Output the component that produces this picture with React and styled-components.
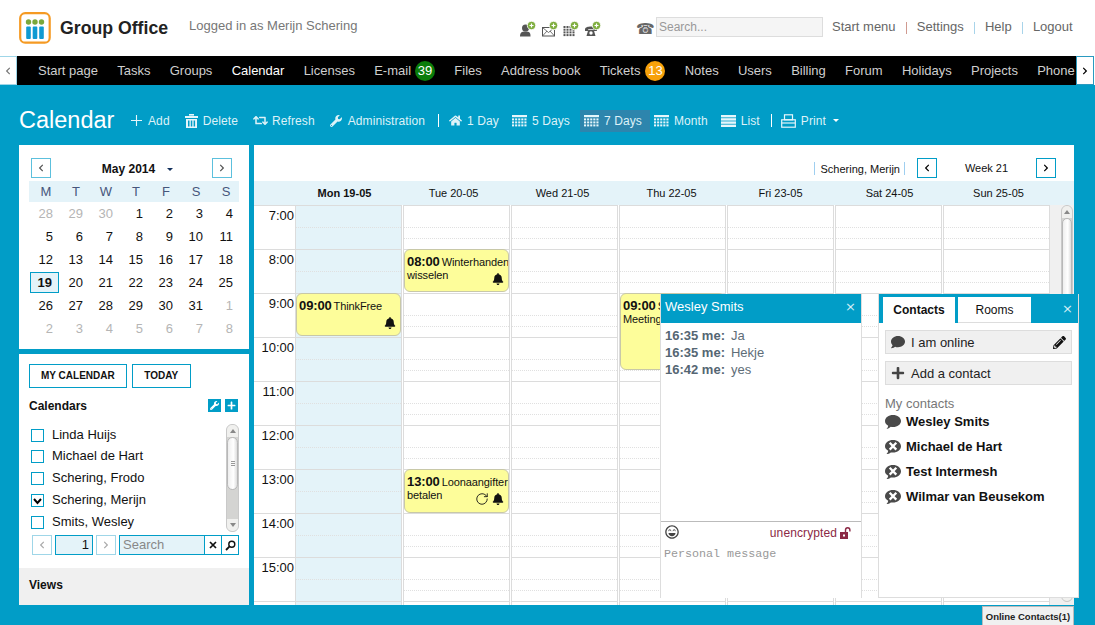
import React from "react";
import styled, { createGlobalStyle } from "styled-components";
import { FaBell, FaWrench, FaHome, FaPencilAlt, FaPlus, FaComment, FaRetweet, FaRegLaughBeam, FaChevronLeft, FaChevronRight } from "react-icons/fa";
import { RotateCw } from "lucide-react";

const BLUE = "#019dc7";
const PALE = "#e4f3f9";
const LINE = "#dcdcdc";

const Global = createGlobalStyle`
  html, body { margin: 0; padding: 0; background: #fff; }
  body { font-family: "Liberation Sans", Arial, sans-serif; font-size: 13px; color: #111; }
  * { box-sizing: border-box; }
`;

const Page = styled.div`
  width: 1095px; height: 625px; overflow: hidden; position: relative;
  display: flex; flex-direction: column; background: ${BLUE};
`;

/* ---------- top header ---------- */
const Header = styled.header`
  height: 56px; background: #fff; display: flex; align-items: flex-start; flex: none;
`;
const LogoWrap = styled.div`margin: 12px 0 0 19px; width: 33px; height: 32px; flex: none;`;
const Brand = styled.div`
  margin: 18px 0 0 8px; width: 129px; font-size: 17.7px; font-weight: 700; line-height: 20px; color: #222; flex: none;
`;
const Logged = styled.div`margin-top: 18px; width: 331px; color: #777; line-height: 16px; flex: none;`;
const AddIcons = styled.div`margin-top: 21px; width: 116px; display: flex; gap: 5.5px; flex: none;`;
const PhoneGlyph = styled.span`
  margin-top: 20px; width: 20px; font: 15px/18px "DejaVu Sans", sans-serif; color: #666; flex: none;
`;
const SearchBox = styled.div`
  margin-top: 17px; width: 167px; height: 20px; background: #f5f5f5; border: 1px solid #ddd;
  color: #999; font-size: 12px; line-height: 18px; padding-left: 2px; flex: none;
`;
const TopLinks = styled.nav`margin: 19px 0 0 9px; display: flex; gap: 10.1px; color: #666; line-height: 16px;`;
const TopSep = styled.span`width: 1px; height: 12px; margin-top: 3px; background: ${p => p.$c};`;

/* ---------- module nav ---------- */
const NavBar = styled.div`height: 29px; display: flex; flex: none; background: #fff;`;
const Scroller = styled.div`
  width: ${p => p.$w}px; margin-right: ${p => p.$mr || 0}px; flex: none; background: #fff; border: 1px solid ${p => p.$b}; ${p => p.$noLeft && "border-left: 0;"}
  display: flex; align-items: center; justify-content: center; color: ${p => p.$c}; font-size: 8px;
`;
const NavItems = styled.div`
  flex: 1; overflow: hidden; display: flex; align-items: center; gap: 19.25px; padding-left: 21px; white-space: nowrap; height: 29px; background: #000; min-width: 0;
`;
const NavItem = styled.span`
  color: ${p => (p.$on ? "#fff" : "#cfcfcf")}; display: inline-flex; align-items: center; gap: ${p => p.$gap || 0}px; flex: none;
`;
const Badge = styled.span`
  width: 20px; height: 20px; border-radius: 50%; background: ${p => p.$c}; color: #fff;
  font-size: 13px; text-align: center; line-height: 20px;
`;

/* ---------- toolbar ---------- */
const Toolbar = styled.div`height: 60px; display: flex; align-items: flex-start; padding: 24px 0 0 19px; color: #fff; flex: none;`;
const Title = styled.h1`margin: 0; width: 107px; font-size: 23.5px; font-weight: 400; line-height: 22px; color: #fff; flex: none;`;
const ToolGroup = styled.div`display: flex; align-items: center; height: 22px; color: #ddf2f8; padding-top: 1px;`;
const ToolBtn = styled.span`
  display: flex; align-items: center; gap: ${p => p.$gap ?? 5}px; height: 22px; padding: 0 ${p => p.$pr ?? 4}px 0 4px; margin-right: ${p => p.$mr ?? 6}px;
  background: ${p => (p.$on ? "#2d85ad" : "transparent")}; font-size: 12px; letter-spacing: 0.1px; white-space: nowrap;
`;
const ToolSep = styled.span`width: 1px; height: 13px; background: #fff; margin: 0 ${p => p.$r}px 0 ${p => p.$l}px;`;
const Caret = styled.span`
  width: 0; height: 0; border: 3px solid transparent; border-top: 3px solid ${p => p.$c || "#fff"}; border-bottom: 0;
  display: inline-block; margin-left: ${p => p.$ml || 0}px;
`;

/* ---------- content ---------- */
const Content = styled.div`
  height: 460px; display: grid; grid-template-columns: 230px 820px; gap: 5px; padding-left: 19px; flex: none;
`;
const Sidebar = styled.aside`display: flex; flex-direction: column; gap: 5px; height: 460px;`;
const PickerPanel = styled.section`background: #fff; height: 204px; padding: 13px 10px 0;`;
const PickerHead = styled.div`display: flex; align-items: center; padding: 0 7px 0 2px; height: 20px;`;
const SquareBtn = styled.span`
  width: ${p => p.$w || 20}px; height: 20px; flex: none; border: 1px solid ${p => p.$c || "#5cc0dd"}; display: flex;
  align-items: center; justify-content: center; font-size: 8px; color: ${p => p.$ink || "#555"}; background: #fff;
`;
const MonthLabel = styled.div`
  flex: 1; display: flex; justify-content: center; align-items: center; font-weight: 700; font-size: 12px; gap: 12px; padding: 2px 0 0 12px;
`;
const WeekBand = styled.div`
  margin-top: 3px; height: 21px; background: ${PALE}; display: grid; grid-template-columns: repeat(7, 30px); padding-left: 2px;
  text-align: center; line-height: 21px; color: #46567c; width: 210px;
`;
const DaysGrid = styled.div`
  display: grid; grid-template-columns: repeat(7, 30px); grid-auto-rows: 23px; padding-left: 2px; margin-top: 0px; width: 210px;
`;
const Day = styled.span`
  text-align: right; padding-right: 8px; line-height: 21px; height: 21px; margin-top: 1px;
  color: ${p => (p.$muted ? "#b5b5b5" : "#111")};
  ${p => p.$sel && `font-weight:700; background:${PALE}; border:1px solid ${BLUE}; line-height:19px; padding-right:6px; margin-left:-1px; margin-right:2px;`}
`;

const CalsPanel = styled.section`background: #fff; flex: 1; display: flex; flex-direction: column; padding-top: 10px;`;
const BtnRow = styled.div`display: flex; gap: 5px; padding-left: 10px;`;
const CapsBtn = styled.span`
  height: 24px; padding: 0 ${p => p.$pad}px; border: 1px solid ${BLUE}; font-size: 10px; font-weight: 700; line-height: 22px; color: #111;
`;
const CalsHead = styled.div`
  display: flex; align-items: center; justify-content: space-between; margin-top: 11px; padding: 0 11px 0 10px; height: 13px;
`;
const Strong = styled.strong`font-size: 12px;`;
const HeadTools = styled.div`display: flex; gap: 4px;`;
const MiniTool = styled.span`
  width: 13px; height: 13px; background: ${BLUE}; color: #fff; display: flex; align-items: center; justify-content: center; font-size: 9px;
`;
const ListArea = styled.div`display: flex; margin-top: 12px; height: 108px; padding-left: 12px;`;
const CalList = styled.ul`list-style: none; margin: 0; padding: 3px 0 0; width: 195px; display: flex; flex-direction: column; gap: 6px;`;
const CalItem = styled.li`
  display: flex; align-items: flex-start; gap: 8px; height: 16px; line-height: 16px;
  &:first-child { margin-bottom: -1px; }
`;
const Check = styled.span`
  width: 13px; height: 13px; border: 1px solid ${BLUE}; display: flex; align-items: center; justify-content: center; background: #fff; flex: none; margin-top: 2px;
`;
const ScrollTrack = styled.div`
  width: ${p => p.$w}px; flex: none; height: 100%; border: 1px solid #c9c9c9; border-radius: 6px; background: #d4d4d2;
  display: flex; flex-direction: column; overflow: hidden;
`;
const ScrollCap = styled.div`height: 12px; flex: none; background: #f0f0ee; display: flex; align-items: center; justify-content: center;`;
const ScrollThumb = styled.div`
  height: ${p => p.$h}px; flex: none; background: linear-gradient(to right, #eee, #fff 60%, #ddd); border: 1px solid #b8b8b8; border-radius: 6px;
  display: flex; flex-direction: column; gap: 1px; align-items: center; justify-content: center;
`;
const Grip = styled.span`width: 4px; height: 1px; background: #999;`;
const ScrollGap = styled.div`flex: 1;`;
const TinyUp = styled.span`width:0;height:0;border:3px solid transparent;border-bottom:4px solid #888;border-top:0;`;
const TinyDown = styled.span`width:0;height:0;border:3px solid transparent;border-top:4px solid #888;border-bottom:0;`;

const Pager = styled.div`display: flex; margin-top: 3px; padding-left: 13px; height: 20px;`;
const PagerInput = styled.span`
  width: 38px; height: 20px; margin: 0 3px; background: ${PALE}; border: 1px solid ${BLUE}; text-align: right; padding-right: 3px; line-height: 18px;
`;
const PagerSearch = styled.span`
  margin-left: 3px; width: 86px; height: 20px; background: ${PALE}; border: 1px solid ${BLUE}; color: #888; padding-left: 3px; line-height: 18px;
`;
const PagerIconBtn = styled.span`
  width: 17px; height: 20px; border: 1px solid ${BLUE}; border-left: 0; display: flex; align-items: center; justify-content: center; background: #fff;
`;
const ViewsBar = styled.div`margin-top: auto; height: 37px; background: #f0f0f0; padding: 10px 0 0 10px; line-height: 14px;`;

/* ---------- calendar ---------- */
const Main = styled.main`background: #fff; height: 460px; display: flex; flex-direction: column; position: relative;`;
const CalTop = styled.div`height: 36px; display: flex; align-items: flex-start; justify-content: flex-end; padding: 13px 18px 0 0; flex: none;`;
const Owner = styled.span`
  margin-top: 4px; height: 13px; padding: 0 4px 0 6px; border-left: 1px solid #9fcff0; border-right: 1px solid #9fcff0;
  font-size: 11px; line-height: 14px; margin-right: 12px;
`;
const WeekLabel = styled.span`width: 99px; text-align: center; font-size: 11px; line-height: 20px;`;
const DayHeads = styled.div`
  height: 24px; background: ${PALE}; display: grid; grid-template-columns: repeat(7, 109px); padding-left: 36px; flex: none;
  text-align: center; font-size: 11px; line-height: 25px;
`;
const DayHead = styled.span`font-weight: ${p => (p.$on ? 700 : 400)};`;
const Schedule = styled.div`flex: 1; display: flex; overflow: hidden; min-height: 0;`;
const TimeCol = styled.div`width: 41px; flex: none;`;
const TimeCell = styled.div`
  height: 44px; border-top: 1px solid ${LINE}; text-align: right; padding-right: 1px; line-height: 19px; color: #111;
`;
const DayCols = styled.div`display: flex; gap: 1px; flex: none;`;
const DayCol = styled.div`
  width: 107px; flex: none; position: relative; border-left: 1px solid ${LINE}; border-right: 1px solid ${LINE};
  background: ${p => (p.$today ? PALE : "#fff")}; height: 440px;
`;
const Slot = styled.div`height: 44px; border-top: 1px solid ${LINE};`;
const SlotPart = styled.div`height: ${p => p.$h}px; ${p => p.$dot && `border-bottom: 1px dotted #e0e0e0;`}`;
const Gutter = styled.div`flex: 1; background: #f0f0f0; padding: 0 1px 3px 11px;`;
const EventBox = styled.div`
  position: absolute; left: 0; width: 105px; top: ${p => p.$top}px; height: ${p => p.$h}px; background: #fdfd9a; border: 1px solid #c8c8a8;
  border-radius: 6px; padding: 4px 0 0 2px; overflow: hidden; font-size: 11px; color: #111;
`;
const EventLine = styled.div`white-space: nowrap; height: 14px; line-height: 15px; word-spacing: -1px; letter-spacing: -0.1px;`;
const EvTime = styled.b`font-size: 13px;`;
const EvIcons = styled.div`position: absolute; right: ${p => p.$r ?? 4}px; bottom: 6px; display: flex; gap: 3px; align-items: center; font-size: 12px;`;

const DockRow = styled.div`height: 20px; display: flex; justify-content: flex-end; padding-right: 21px; flex: none;`;
const DockBtn = styled.span`
  width: 92px; height: 20px; margin-top: 1px; background: #f0f0f0; border: 1px solid #bbb; border-bottom: 0; font-size: 9.5px; font-weight: 700;
  text-align: center; line-height: 19px; color: #222;
`;

/* ---------- floating windows ---------- */
const ChatWin = styled.div`
  position: absolute; left: 660px; top: 294px; width: 202px; height: 304px; background: #fff; border-left: 1px solid #ddd; border-right: 1px solid #ddd;
  display: flex; flex-direction: column;
`;
const WinHead = styled.div`
  height: 29px; flex: none; background: ${BLUE}; color: #fff; display: flex; align-items: center; justify-content: space-between;
  padding: 0 5px 4px 4px; font-size: 13px;
`;
const CloseX = styled.span`font: 13px/13px "DejaVu Sans", sans-serif; color: #d5eef6;`;
const Messages = styled.div`height: 199px; flex: none; padding: 4px 4px; display: flex; flex-direction: column; border-bottom: 1px solid #bbb;`;
const Msg = styled.div`display: flex; gap: 6px; line-height: 17px; color: #5e6d78; height: 17px;`;
const MsgWho = styled.b`color: #556673;`;
const ChatBar = styled.div`height: 20px; flex: none; display: flex; align-items: center; justify-content: space-between; padding: 0 9px 0 4px; color: #8b2845; font-size: 12px; letter-spacing: 0.1px;`;
const Unenc = styled.span`display: flex; align-items: center; gap: 3px; margin-top: 2px;`;
const ChatInput = styled.div`padding: 3px 3px; font: 11.7px/16px "Liberation Mono", monospace; color: #999; margin-top: 1px;`;

const ContactsWin = styled.div`
  position: absolute; left: 878px; top: 294px; width: 201px; height: 304px; background: #fff; border: 1px solid #ddd; border-top: 0; display: flex; flex-direction: column;
`;
const TabStrip = styled.div`
  height: 29px; flex: none; background: ${BLUE}; display: flex; align-items: flex-end; gap: 3px; padding-left: 4px;
`;
const Tab = styled.span`
  width: ${p => (p.$on ? 72 : 73)}px; height: 26px; background: #fff; text-align: center; line-height: 26px; font-weight: ${p => (p.$on ? 700 : 400)}; font-size: 12px;
  border-bottom: ${p => (p.$on ? "0" : "1px solid #ddd")}; color: #111;
`;
const TabClose = styled(CloseX)`margin-left: auto; margin-right: 5px; align-self: center;`;
const RowBtn = styled.div`
  margin: ${p => p.$mt}px 6px 0 6px; height: 24px; background: #f0f0f0; border: 1px solid #ddd; display: flex; align-items: center; padding: 0 5px; gap: 6px; color: #222;
`;
const RowIcon = styled.span`width: 14px; display: flex; color: #444; font-size: 14px;`;
const RowEnd = styled.span`margin-left: auto; display: flex; font-size: 13px; color: #111;`;
const ContactsLabel = styled.div`margin: 11px 0 0 6px; color: #777; line-height: 16px;`;
const ContactList = styled.div`margin: 0 0 0 6px; display: flex; flex-direction: column; gap: 6px;`;
const Contact = styled.div`display: flex; align-items: center; gap: 5px; height: 19px; font-weight: 700;`;

/* ---------- drawings ---------- */
const Logo = () => (
  <svg width="33" height="32" viewBox="0 0 33 32">
    <rect x="1.2" y="1.2" width="29.5" height="29.5" rx="5" fill="#fff" stroke="#f59a23" strokeWidth="2.2" />
    {[9.5, 16, 22.5].map(x => (
      <g key={x}>
        <circle cx={x} cy="10" r="2.7" fill="#7aa83b" />
        <rect x={x - 2.3} y="14.5" width="4.6" height="12.5" rx="1" fill="#0f9ad2" />
      </g>
    ))}
  </svg>
);
const GreenPlus = () => (
  <>
    <circle cx="11.5" cy="4.5" r="4.2" fill="#7fae3f" stroke="#fff" strokeWidth="0.8" />
    <path d="M9.5 4.5h4M11.5 2.5v4" stroke="#fff" strokeWidth="1.2" />
  </>
);
const Sized = ({ children }) => <svg width="16" height="16" viewBox="0 0 16 16">{children}</svg>;
const PersonAdd = () => (
  <Sized>
    <circle cx="5.5" cy="7" r="3.5" fill="#555" />
    <path d="M0 15.5c0-4 1.5-5 5.5-5s5 1 5 5z" fill="#555" />
    <GreenPlus />
  </Sized>
);
const MailAdd = () => (
  <Sized>
    <rect x="0.5" y="6.5" width="12" height="8.5" fill="#fff" stroke="#555" />
    <path d="M.5 6.5l6 5 6-5M.5 15l4.5-5M12.5 15l-4.5-5" fill="none" stroke="#555" strokeWidth="0.8" />
    <GreenPlus />
  </Sized>
);
const GridAdd = () => (
  <Sized>
    {[0, 1, 2, 3].map(r => [0, 1, 2, 3].map(c => <rect key={`${r}${c}`} x={0.5 + c * 3} y={5 + r * 2.7} width="2" height="2" fill="#555" />))}
    <GreenPlus />
  </Sized>
);
const PhoneAdd = () => (
  <Sized>
    <path d="M0 8.5C0 6.3 3 5.5 6 5.5s6 .8 6 3V10H8.800V8.300H3.200V10H0z" fill="#555" />
    <path d="M3.200 9h5.600l1.700 6h-9z" fill="#555" />
    <circle cx="6" cy="12" r="1.700" fill="#fff" />
    <GreenPlus />
  </Sized>
);
const GridIcon = () => (
  <svg width="15" height="12" viewBox="0 0 15 12">
    <rect x="0" y="0" width="15" height="2.2" fill="#e6f6fb" />
    {[0, 1, 2].map(r => [0, 1, 2, 3, 4].map(c => <rect key={`${r}${c}`} x={c * 3.1} y={3.4 + r * 3} width="2.1" height="2" fill="#e6f6fb" />))}
  </svg>
);
const ListIcon = () => (
  <svg width="15" height="12" viewBox="0 0 15 12" fill="#e6f6fb">
    <rect y="0" width="15" height="2.4" /><rect y="3.2" width="15" height="2.4" /><rect y="6.4" width="15" height="2.4" /><rect y="9.6" width="15" height="2.4" />
  </svg>
);
const PrintIcon = () => (
  <svg width="15" height="14" viewBox="0 0 15 14" fill="none" stroke="#e6f6fb" strokeWidth="1.2">
    <rect x="3.5" y="0.8" width="8" height="5" />
    <rect x="0.7" y="5.8" width="13.6" height="7.4" />
    <path d="M0.7 9h13.6" />
  </svg>
);
const PlusIcon = () => (
  <svg width="13" height="13" viewBox="0 0 13 13"><path d="M6.5 1v11M1 6.5h11" stroke="#e6f6fb" strokeWidth="1.1" /></svg>
);
const TrashIcon = () => (
  <svg width="13" height="14" viewBox="0 0 13 14" fill="#e6f6fb">
    <rect x="4" y="0" width="5" height="1.6" /><rect x="0" y="2" width="13" height="2" />
    <path d="M1 5h11v9H1zM3 6.5v6h1.5v-6zM5.8 6.5v6h1.5v-6zM8.6 6.5v6h1.5v-6z" fillRule="evenodd" />
  </svg>
);
const TickIcon = () => (
  <svg width="9" height="8" viewBox="0 0 9 8"><path d="M1 2l3.5 4L8 2" fill="none" stroke="#000" strokeWidth="2" /></svg>
);
const Magnifier = () => (
  <svg width="11" height="11" viewBox="0 0 11 11" fill="none" stroke="#111" strokeWidth="1.4">
    <circle cx="6.8" cy="4.2" r="3" /><path d="M4.6 6.4L1 10" strokeWidth="1.8" />
  </svg>
);
const SmallX = () => (
  <svg width="8" height="8" viewBox="0 0 8 8"><path d="M1 1l6 6M7 1l-6 6" stroke="#111" strokeWidth="1.7" /></svg>
);
const LockOpen = () => (
  <svg width="12" height="12" viewBox="0 0 12 12">
    <rect x="0" y="5" width="8" height="7" fill="#8b2845" />
    <rect x="3" y="7.5" width="2" height="2" fill="#fff" />
    <path d="M5.5 5V3a2.2 2.2 0 0 1 4.4 0v1.5" fill="none" stroke="#8b2845" strokeWidth="1.4" />
  </svg>
);
const BubbleOn = () => (
  <svg width="16" height="14" viewBox="0 0 16 14"><path d="M8 0c4.4 0 8 2.6 8 6s-3.6 6-8 6c-.8 0-1.5-.1-2.2-.2C4.6 13 2.8 14 1.5 14c1-1 1.6-2 1.7-3.2C1.2 9.7 0 8 0 6c0-3.4 3.6-6 8-6z" fill="#4a4a4a" /></svg>
);
const BubbleOff = () => (
  <svg width="16" height="14" viewBox="0 0 16 14">
    <path d="M8 0c4.4 0 8 2.6 8 6.3s-3.6 6.3-8 6.3c-.8 0-1.5-.1-2.2-.2C4.6 13.300 2.800 14 1.500 14c1-1 1.600-2 1.700-3.200C1.200 9.700 0 8.300 0 6.300 0 2.600 3.600 0 8 0z" fill="#4a4a4a" />
    <path d="M4.700 2.800l6.600 6.800M11.300 2.800l-6.600 6.800" stroke="#fff" strokeWidth="2.3" />
  </svg>
);

const Scrollbar = ({ w, h }) => (
  <ScrollTrack $w={w}>
    <ScrollCap><TinyUp /></ScrollCap>
    <ScrollThumb $h={h}><Grip /><Grip /><Grip /></ScrollThumb>
    <ScrollGap />
    <ScrollCap><TinyDown /></ScrollCap>
  </ScrollTrack>
);

/* ---------- data ---------- */
const navItems = [
  ["Start page"], ["Tasks"], ["Groups"], ["Calendar", null, true], ["Licenses"], ["E-mail", ["39", "#0a7d0a", 4]], ["Files"],
  ["Address book"], ["Tickets", ["13", "#f7a10a", 5]], ["Notes"], ["Users"], ["Billing"], ["Forum"], ["Holidays"], ["Projects"], ["Phone"],
];
const weeks = [
  [28, 29, 30, 1, 2, 3, 4], [5, 6, 7, 8, 9, 10, 11], [12, 13, 14, 15, 16, 17, 18],
  [19, 20, 21, 22, 23, 24, 25], [26, 27, 28, 29, 30, 31, 1], [2, 3, 4, 5, 6, 7, 8],
];
const calendars = [["Linda Huijs"], ["Michael de Hart"], ["Schering, Frodo"], ["Schering, Merijn", true], ["Smits, Wesley"]];
const dayHeads = ["Mon 19-05", "Tue 20-05", "Wed 21-05", "Thu 22-05", "Fri 23-05", "Sat 24-05", "Sun 25-05"];
const hours = ["7:00", "8:00", "9:00", "10:00", "11:00", "12:00", "13:00", "14:00", "15:00", "16:00"];
const events = {
  0: [{ top: 88, h: 43, time: "09:00", title: "ThinkFree", bell: true, r: 4 }],
  1: [
    { top: 44, h: 43, time: "08:00", title: "Winterhanden", second: "wisselen", bell: true, r: 4 },
    { top: 264, h: 44, time: "13:00", title: "Loonaangifter", second: "betalen", bell: true, repeat: true, r: 4 },
  ],
  3: [{ top: 88, h: 77, time: "09:00", title: "Sprint", second: "Meeting" }],
};

const Hours = ({ today }) => hours.map(h => (
  <Slot key={h}>
    <SlotPart $h={22} $dot /><SlotPart $h={11} $dot={!today} />
  </Slot>
));

export default function App() {
  return (
    <Page>
      <Global />
      <Header>
        <LogoWrap><Logo /></LogoWrap>
        <Brand>Group Office</Brand>
        <Logged>Logged in as Merijn Schering</Logged>
        <AddIcons><PersonAdd /><MailAdd /><GridAdd /><PhoneAdd /></AddIcons>
        <PhoneGlyph>☎</PhoneGlyph>
        <SearchBox>Search...</SearchBox>
        <TopLinks>
          <span>Start menu</span><TopSep $c="#d09a90" />
          <span>Settings</span><TopSep $c="#a8d4ea" />
          <span>Help</span><TopSep $c="#a8d4ea" />
          <span>Logout</span>
        </TopLinks>
      </Header>

      <NavBar>
        <Scroller $w={17} $c="#777" $b="#9fd6e8" $noLeft><FaChevronLeft /></Scroller>
        <NavItems>
          {navItems.map(([label, badge, on]) => (
            <NavItem key={label} $on={on} $gap={badge ? badge[2] : 0}>
              {label}{badge && <Badge $c={badge[1]}>{badge[0]}</Badge>}
            </NavItem>
          ))}
        </NavItems>
        <Scroller $w={18} $mr={1} $c="#000" $b="#2a9ac0"><FaChevronRight /></Scroller>
      </NavBar>

      <Toolbar>
        <Title>Calendar</Title>
        <ToolGroup>
          <ToolBtn $mr={7}><PlusIcon />Add</ToolBtn>
          <ToolBtn $mr={7}><TrashIcon />Delete</ToolBtn>
          <ToolBtn $mr={7} $gap={4}><FaRetweet size={15} />Refresh</ToolBtn>
          <ToolBtn $mr={0} $gap={6}><FaWrench size={12} />Administration</ToolBtn>
          <ToolSep $l={9} $r={6} />
          <ToolBtn $mr={5}><FaHome size={13} />1 Day</ToolBtn>
          <ToolBtn $mr={6}><GridIcon />5 Days</ToolBtn>
          <ToolBtn $on $mr={0} $pr={8}><GridIcon />7 Days</ToolBtn>
          <ToolBtn $mr={5}><GridIcon />Month</ToolBtn>
          <ToolBtn $mr={0}><ListIcon />List</ToolBtn>
          <ToolSep $l={7} $r={5} />
          <ToolBtn><PrintIcon />Print<Caret $ml={2} /></ToolBtn>
        </ToolGroup>
      </Toolbar>

      <Content>
        <Sidebar>
          <PickerPanel>
            <PickerHead>
              <SquareBtn><FaChevronLeft /></SquareBtn>
              <MonthLabel>May 2014<Caret $c="#12305c" /></MonthLabel>
              <SquareBtn><FaChevronRight /></SquareBtn>
            </PickerHead>
            <WeekBand>{["M", "T", "W", "T", "F", "S", "S"].map((d, i) => <span key={i}>{d}</span>)}</WeekBand>
            <DaysGrid>
              {weeks.flatMap((w, wi) => w.map((d, di) => (
                <Day key={`${wi}-${di}`} $sel={wi === 3 && di === 0} $muted={(wi === 0 && di < 3) || (wi === 4 && di === 6) || wi === 5}>{d}</Day>
              )))}
            </DaysGrid>
          </PickerPanel>
          <CalsPanel>
            <BtnRow>
              <CapsBtn $pad={11}>MY CALENDAR</CapsBtn>
              <CapsBtn $pad={11.5}>TODAY</CapsBtn>
            </BtnRow>
            <CalsHead>
              <Strong>Calendars</Strong>
              <HeadTools><MiniTool><FaWrench /></MiniTool><MiniTool><FaPlus /></MiniTool></HeadTools>
            </CalsHead>
            <ListArea>
              <CalList>
                {calendars.map(([name, on]) => (
                  <CalItem key={name}><Check>{on && <TickIcon />}</Check>{name}</CalItem>
                ))}
              </CalList>
              <Scrollbar w={13} h={53} />
            </ListArea>
            <Pager>
              <SquareBtn $c="#9fd6e8" $ink="#aaa"><FaChevronLeft /></SquareBtn>
              <PagerInput>1</PagerInput>
              <SquareBtn $c="#9fd6e8" $ink="#aaa"><FaChevronRight /></SquareBtn>
              <PagerSearch>Search</PagerSearch>
              <PagerIconBtn><SmallX /></PagerIconBtn>
              <PagerIconBtn><Magnifier /></PagerIconBtn>
            </Pager>
            <ViewsBar><Strong>Views</Strong></ViewsBar>
          </CalsPanel>
        </Sidebar>

        <Main>
          <CalTop>
            <Owner>Schering, Merijn</Owner>
            <SquareBtn $c={BLUE} $ink="#000"><FaChevronLeft /></SquareBtn>
            <WeekLabel>Week 21</WeekLabel>
            <SquareBtn $c={BLUE} $ink="#000"><FaChevronRight /></SquareBtn>
          </CalTop>
          <DayHeads>
            {dayHeads.map((d, i) => <DayHead key={d} $on={i === 0}>{d}</DayHead>)}
          </DayHeads>
          <Schedule>
            <TimeCol>{hours.map(h => <TimeCell key={h}>{h}</TimeCell>)}</TimeCol>
            <DayCols>
              {dayHeads.map((d, i) => (
                <DayCol key={d} $today={i === 0}>
                  <Hours today={i === 0} />
                  {(events[i] || []).map(ev => (
                    <EventBox key={ev.time} $top={ev.top} $h={ev.h}>
                      <EventLine><EvTime>{ev.time}</EvTime> {ev.title}</EventLine>
                      {ev.second && <EventLine>{ev.second}</EventLine>}
                      {(ev.bell || ev.repeat) && (
                        <EvIcons $r={ev.r}>
                          {ev.repeat && <RotateCw size={14} strokeWidth={1.5} />}
                          {ev.bell && <FaBell />}
                        </EvIcons>
                      )}
                    </EventBox>
                  ))}
                </DayCol>
              ))}
            </DayCols>
            <Gutter><Scrollbar w={12} h={360} /></Gutter>
          </Schedule>
        </Main>
      </Content>

      <DockRow><DockBtn>Online Contacts(1)</DockBtn></DockRow>

      <ChatWin>
        <WinHead>Wesley Smits<CloseX>×</CloseX></WinHead>
        <Messages>
          <Msg><MsgWho>16:35 me:</MsgWho>Ja</Msg>
          <Msg><MsgWho>16:35 me:</MsgWho>Hekje</Msg>
          <Msg><MsgWho>16:42 me:</MsgWho>yes</Msg>
        </Messages>
        <ChatBar>
          <FaRegLaughBeam size={14} color="#444" />
          <Unenc>unencrypted<LockOpen /></Unenc>
        </ChatBar>
        <ChatInput>Personal message</ChatInput>
      </ChatWin>

      <ContactsWin>
        <TabStrip>
          <Tab $on>Contacts</Tab>
          <Tab>Rooms</Tab>
          <TabClose>×</TabClose>
        </TabStrip>
        <RowBtn $mt={7}>
          <RowIcon><FaComment /></RowIcon>I am online
          <RowEnd><FaPencilAlt /></RowEnd>
        </RowBtn>
        <RowBtn $mt={7}>
          <RowIcon><FaPlus /></RowIcon>Add a contact
        </RowBtn>
        <ContactsLabel>My contacts</ContactsLabel>
        <ContactList>
          <Contact><BubbleOn />Wesley Smits</Contact>
          <Contact><BubbleOff />Michael de Hart</Contact>
          <Contact><BubbleOff />Test Intermesh</Contact>
          <Contact><BubbleOff />Wilmar van Beusekom</Contact>
        </ContactList>
      </ContactsWin>
    </Page>
  );
}
